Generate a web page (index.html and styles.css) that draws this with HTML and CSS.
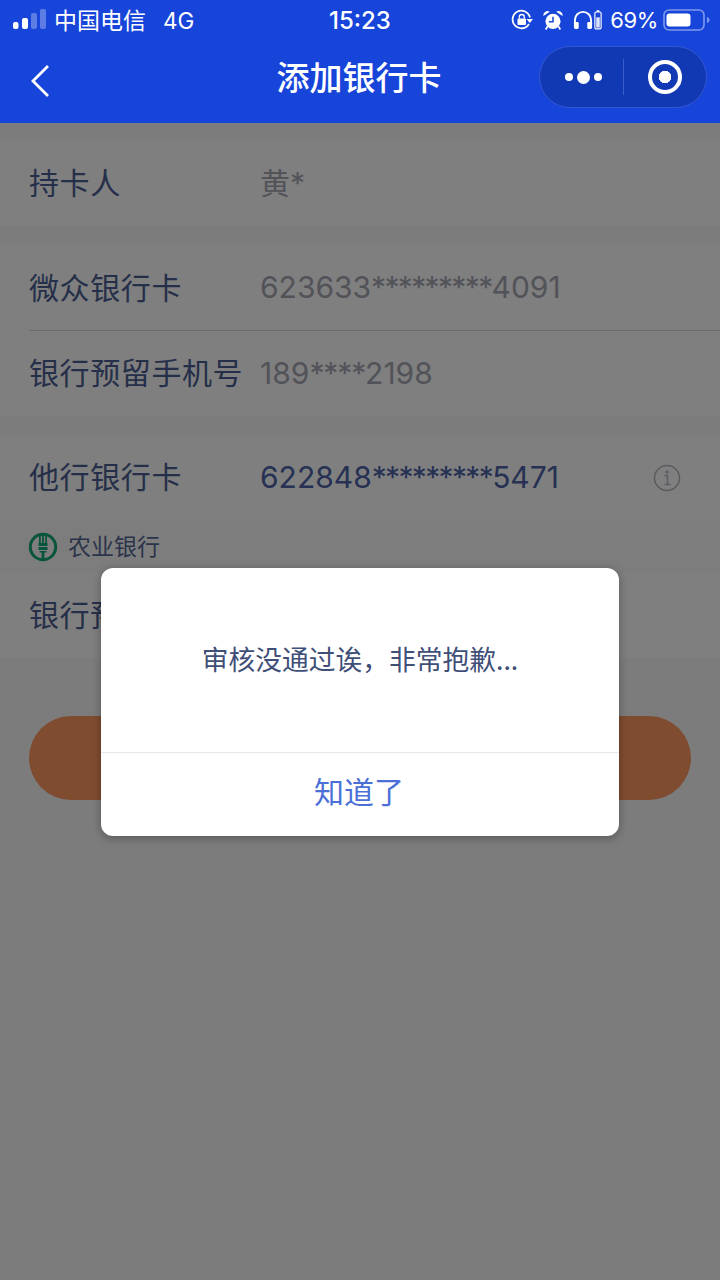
FILE: index.html
```html
<!DOCTYPE html>
<html lang="zh">
<head>
<meta charset="utf-8">
<title>添加银行卡</title>
<link rel="stylesheet" href="styles.css">
</head>
<body>
<div class="page">
  <header class="header">
    <div class="status">
      <div class="status-left">
        <svg class="signal" width="34" height="22" viewBox="0 0 34 22"><rect x="0" y="13" width="5.500" height="7" rx="2" fill="#fff"/><rect x="9" y="9" width="6" height="11" rx="2" fill="#fff"/><rect x="18" y="4" width="6" height="16" rx="2" fill="#fff" opacity=".3"/><rect x="27" y="0" width="6" height="20" rx="2" fill="#fff" opacity=".3"/></svg>
        <span class="carrier">中国电信</span>
        <span class="net">4G</span>
      </div>
      <div class="time">15:23</div>
      <div class="status-right">
        <svg class="lock" width="22" height="22" viewBox="0 0 22 22" fill="none"><path d="M18 15A8.800 8.800 0 1 1 19 8.500" stroke="#fff" stroke-width="1.800"/><path d="M15.500 10h6.500l-3.200 4z" fill="#fff"/><rect x="6.500" y="9.500" width="8.500" height="6.500" rx="1" fill="#fff"/><path d="M8.300 9.500V8a2.500 2.500 0 0 1 5 0v1.500" stroke="#fff" stroke-width="1.300"/></svg>
        <svg class="alarm" width="20" height="20" viewBox="0 0 22 22" fill="none"><circle cx="11" cy="12.500" r="8.300" fill="#fff"/><path d="M11 7.500v5.500H6.500" stroke="#1745d9" stroke-width="1.700"/><path d="M0.500 6.500a4.500 4.500 0 0 1 7-4.500zM21.500 6.500a4.500 4.500 0 0 0-7-4.500z" fill="#fff"/><path d="M5 18l-2 3.500M17 18l2 3.500" stroke="#fff" stroke-width="2"/></svg>
        <svg class="phones" width="20" height="20" viewBox="0 0 21 20" fill="none"><path d="M2 15v-5a8.500 8.500 0 0 1 17 0v5" stroke="#fff" stroke-width="2"/><rect x="1" y="12" width="5" height="7.500" rx="1.500" fill="#fff"/><rect x="15" y="12" width="5" height="7.500" rx="1.500" fill="#fff"/></svg>
        <svg class="podbat" width="8" height="20" viewBox="0 0 9 22" fill="none"><rect x="3" y="0" width="3" height="2" fill="#fff"/><rect x="1" y="2" width="7" height="19" rx="1.500" stroke="#fff" stroke-width="1.300"/><rect x="2.500" y="8" width="4" height="11.500" fill="#fff" opacity=".85"/></svg>
        <span class="pct">69%</span>
        <svg class="batt" width="47" height="22" viewBox="0 0 47 22" fill="none"><rect x="1" y="1" width="40" height="20" rx="5" stroke="#fff" stroke-opacity=".45" stroke-width="1.600"/><rect x="3.500" y="4.500" width="24" height="13" rx="3" fill="#fff"/><path d="M44 8c1.500.4 2.500 1.500 2.500 3s-1 2.600-2.500 3z" fill="#fff" opacity=".45"/></svg>
      </div>
    </div>
    <div class="nav">
      <svg class="back" width="20" height="34" viewBox="0 0 20 34" fill="none"><path d="M18 2L3 17l15 15" stroke="#fff" stroke-width="2.800"/></svg>
      <h1 class="title">添加银行卡</h1>
      <div class="capsule">
        <div class="cap-dots"><i class="dot"></i><i class="dot dot-big"></i><i class="dot"></i></div>
        <div class="cap-line"></div>
        <div class="cap-target"><i class="target-inner"></i></div>
      </div>
    </div>
  </header>

  <main class="content">
    <section class="group">
      <div class="row"><span class="label">持卡人</span><span class="value">黄<span class="stars">*</span></span></div>
    </section>
    <section class="group">
      <div class="row row-b"><span class="label">微众银行卡</span><span class="value">623633<span class="stars">*********</span>4091</span></div>
      <div class="row"><span class="label">银行预留手机号</span><span class="value">189<span class="stars stars-short">****</span>2198</span></div>
    </section>
    <section class="group">
      <div class="row">
        <span class="label">他行银行卡</span><span class="value value-dark">622848<span class="stars">*********</span>5471</span>
        <svg class="info" width="28" height="28" viewBox="0 0 28 28" fill="none"><circle cx="14" cy="14" r="12.500" stroke="#b4b6c0" stroke-width="1.500"/><circle cx="14" cy="8" r="1.500" fill="#b4b6c0"/><path d="M11.500 11.500H14.500V20M11.500 20.500h6" stroke="#b4b6c0" stroke-width="1.500"/></svg>
      </div>
      <div class="bank">
        <svg width="30" height="30" viewBox="0 0 30 30" fill="none"><circle cx="15" cy="15" r="12.700" stroke="#12a878" stroke-width="3"/><rect x="11" y="2" width="1.800" height="10" fill="#12a878"/><rect x="14.100" y="2" width="1.800" height="10" fill="#12a878"/><rect x="17.200" y="2" width="1.800" height="10" fill="#12a878"/><path d="M10.500 11h9v3h-9zM10.500 15h9v3h-9zM11.500 19h7v1.500h-7z" fill="#12a878"/><rect x="13.600" y="20" width="2.800" height="8" fill="#12a878"/></svg>
        <span class="bank-name">农业银行</span>
      </div>
      <div class="row row-last"><span class="label">银行预留手机号</span></div>
    </section>
    <div class="action"><div class="btn"></div></div>
  </main>

  <div class="mask"></div>
  <div class="modal">
    <div class="modal-body">审核没通过诶，非常抱歉...</div>
    <div class="modal-btn">知道了</div>
  </div>
</div>
</body>
</html>
```
FILE: styles.css
```css
* { box-sizing: border-box; }
html, body { margin: 0; padding: 0; }
body { font-family: "Noto Sans CJK SC", "Noto Sans", sans-serif; background: #fafafa; }
.page { position: relative; width: 720px; height: 1280px; overflow: hidden; background: #fafafa; }
.header { position: relative; z-index: 2; background: #1745d9; height: 123px; color: #fff; }
.status { height: 40px; display: flex; align-items: center; justify-content: space-between; padding: 0 10px 0 13px; position: relative; }
.status-left { display: flex; align-items: center; }
.carrier { font-size: 23px; margin-left: 7px; font-weight: 400; line-height: 1; padding-bottom: 2px; }
.net { font-family: Inter, sans-serif; font-size: 22.500px; margin-left: 17px; font-weight: 400; }
.time { position: absolute; left: 329px; font-family: Inter, sans-serif; font-size: 24px; font-weight: 500; }
.status-right { display: flex; align-items: center; }
.alarm { margin-left: 10px; }
.phones { margin-left: 10px; }
.podbat { margin-left: 1px; }
.pct { font-family: Inter, sans-serif; font-size: 22px; margin: 0 5px 0 8px; font-weight: 400; letter-spacing: -.4px; }
.nav { height: 83px; position: relative; display: flex; align-items: center; justify-content: center; padding: 0 2px 11px 0; }
.back { position: absolute; left: 30px; top: 24px; }
.title { margin: 0; font-size: 33px; font-weight: 500; line-height: 1; }
.capsule { position: absolute; left: 539px; top: 6px; width: 168px; height: 62px; border-radius: 31px; background: #1239b4; border: 1px solid #3258d0; display: flex; align-items: center; }
.cap-dots { width: 83px; padding-left: 4px; display: flex; align-items: center; justify-content: center; gap: 4px; }
.dot { width: 8px; height: 8px; border-radius: 50%; background: #fff; }
.dot-big { width: 13px; height: 13px; }
.cap-line { width: 1px; height: 36px; background: #3a5dc9; }
.cap-target { flex: 1; height: 34px; display: flex; align-items: center; justify-content: center; }
.target-inner { width: 34px; height: 34px; border-radius: 50%; border: 4px solid #fff; background: radial-gradient(circle, #fff 0 6px, transparent 6.500px); }
.content { padding-top: 18px; background: #f8f8f8; min-height: 1157px; }
.group { background: #fefefe; margin-bottom: 19px; }
.row { display: flex; align-items: center; height: 85px; padding-left: 30px; position: relative; }
.row-b { height: 86px; }
.row-b::after { content: ""; position: absolute; left: 29px; right: 0; bottom: 0; height: 1px; background: #d8d8d8; }
.label { width: 230px; font-size: 30px; color: #4c5e92; font-weight: 400; line-height: 1; white-space: nowrap; letter-spacing: .6px; margin-left: -1px; padding-bottom: 5px; flex: none; margin-right: 1px; }
.value { font-family: Inter, "Noto Sans CJK SC", sans-serif; font-size: 30px; color: #a4a6b2; line-height: 1; padding-bottom: 2px; }
.stars { letter-spacing: -1.650px; }
.stars-short { letter-spacing: -1.100px; }
.value-dark { color: #4c62a6; }
.info { position: absolute; left: 653px; top: 29px; }
.bank { height: 53px; background: #fbfbfb; display: flex; align-items: center; padding-left: 28px; }
.bank-name { font-size: 23px; color: #566896; margin-left: 10px; line-height: 1; padding-bottom: 2px; }
.action { padding: 58px 29px 0; margin-top: -19px; }
.btn { height: 84px; border-radius: 42px; background: #fe9860; }
.mask { position: absolute; inset: 0; z-index: 1; background: rgba(0,0,0,.5); }
.modal { position: absolute; z-index: 3; left: 101px; top: 568px; width: 518px; height: 268px; background: #fff; border-radius: 12px; box-shadow: 0 2px 10px rgba(0,0,0,.3); display: flex; flex-direction: column; }
.modal-body { height: 185px; border-bottom: 1px solid #e8e8e8; display: flex; align-items: center; justify-content: center; font-size: 26.750px; color: #3f4f78; font-weight: 400; padding-bottom: 3px; }
.modal-btn { flex: 1; display: flex; align-items: center; justify-content: center; font-size: 30px; color: #4a70d8; padding: 0 2px 10px 0; }
```
